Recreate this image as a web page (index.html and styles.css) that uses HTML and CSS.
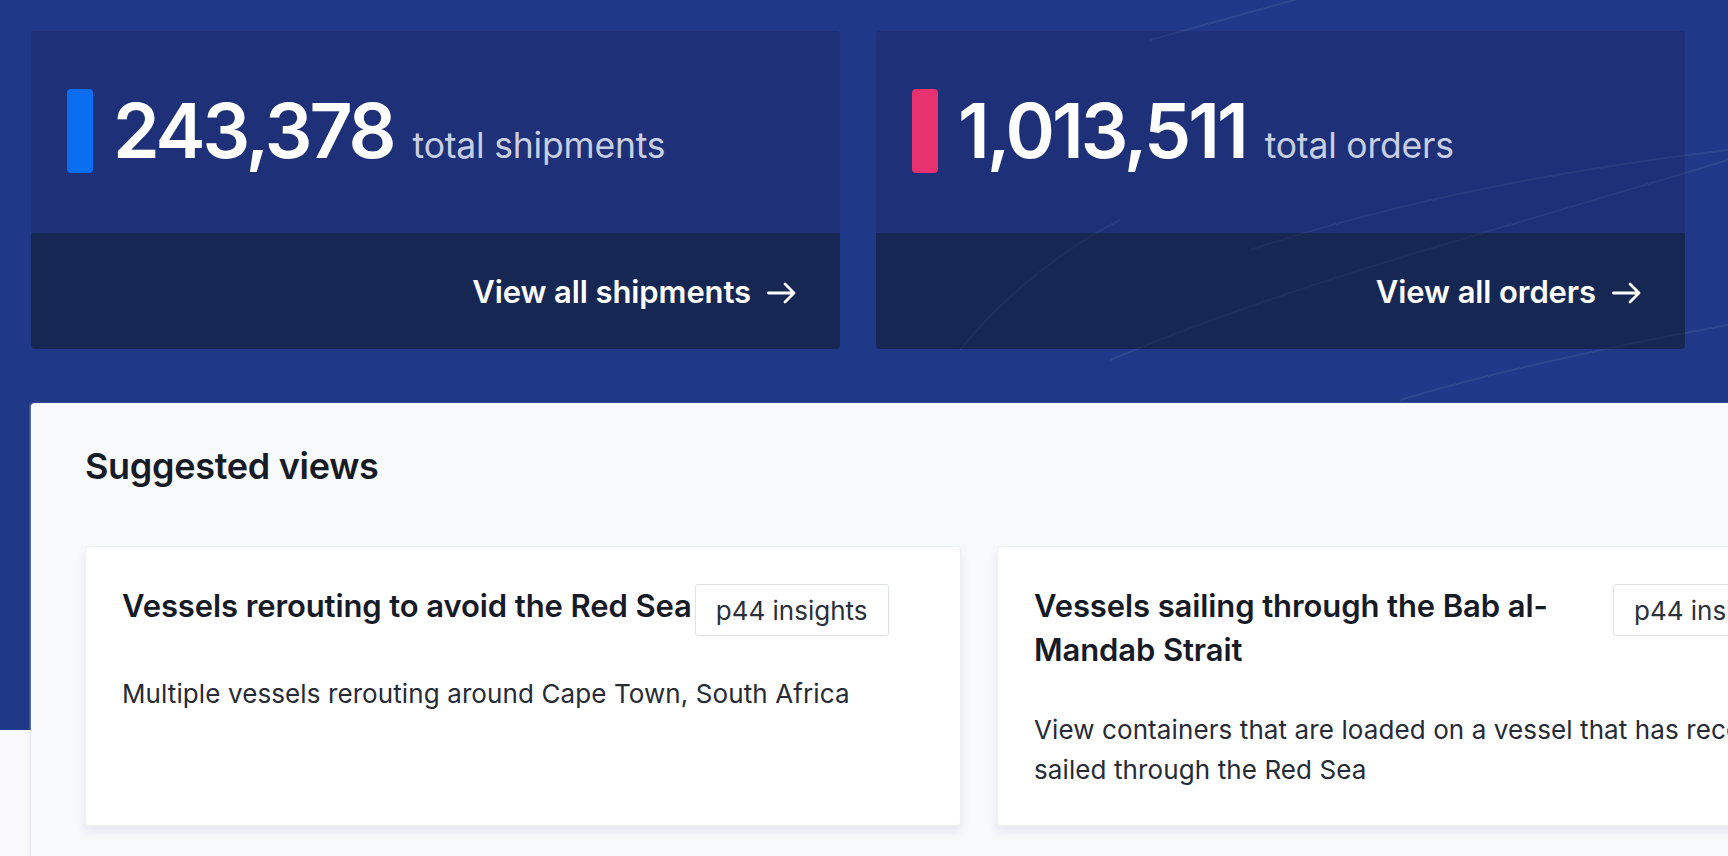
FILE: index.html
```html
<!DOCTYPE html>
<html lang="en">
<head>
<meta charset="utf-8">
<title>Dashboard</title>
<link rel="stylesheet" href="styles.css">
</head>
<body>
<div class="page">
  <svg class="streaks" width="1728" height="730" viewBox="0 0 1728 730" aria-hidden="true">
    <path d="M1150 40 L1330 -10" />
    <path d="M1110 360 C1300 280 1500 230 1728 160" />
    <path d="M1400 400 C1500 370 1620 345 1728 325" />
    <path d="M960 350 C1000 300 1060 250 1120 220" />
    <path d="M1250 250 C1400 200 1560 170 1728 150" />
  </svg>
  <section class="hero">
    <div class="stat">
      <div class="stat-main">
        <span class="accent accent-blue"></span>
        <div class="stat-figure">
          <span class="stat-num">243,378</span>
          <span class="stat-label">total shipments</span>
        </div>
      </div>
      <a class="stat-link" href="#">View all shipments
        <svg class="arrow" width="30" height="22" viewBox="0 0 30 22"><path d="M1.5 11 H27 M18 2 L27 11 L18 20" /></svg>
      </a>
    </div>
    <div class="stat">
      <div class="stat-main">
        <span class="accent accent-pink"></span>
        <div class="stat-figure">
          <span class="stat-num">1,013,511</span>
          <span class="stat-label">total orders</span>
        </div>
      </div>
      <a class="stat-link" href="#">View all orders
        <svg class="arrow" width="30" height="22" viewBox="0 0 30 22"><path d="M1.5 11 H27 M18 2 L27 11 L18 20" /></svg>
      </a>
    </div>
  </section>
  <section class="panel">
    <h2 class="panel-title">Suggested views</h2>
    <div class="views">
      <article class="view">
        <div class="view-head">
          <h3 class="view-title">Vessels rerouting to avoid the Red Sea</h3>
          <span class="badge">p44 insights</span>
        </div>
        <p class="view-desc">Multiple vessels rerouting around Cape Town, South Africa</p>
      </article>
      <article class="view">
        <div class="view-head">
          <h3 class="view-title">Vessels sailing through the Bab al-Mandab Strait</h3>
          <span class="badge">p44 insights</span>
        </div>
        <p class="view-desc">View containers that are loaded on a vessel that has recently sailed through the Red Sea</p>
      </article>
    </div>
  </section>
</div>
</body>
</html>
```

FILE: styles.css
```css
* { box-sizing: border-box; }
html, body {
  margin: 0;
  padding: 0;
  overflow: hidden;
}
body {
  width: 1728px;
  height: 856px;
  font-family: Inter, "Noto Sans", "Liberation Sans", sans-serif;
  background: linear-gradient(#1f3887 0, #1f3887 730px, #f9f9fb 730px);
}
.page {
  position: relative;
  width: 1728px;
  height: 856px;
  overflow: hidden;
}
.streaks {
  position: absolute;
  left: 0;
  top: 0;
  pointer-events: none;
}
.streaks path {
  fill: none;
  stroke: rgba(255, 255, 255, 0.07);
  stroke-width: 2;
}
.hero {
  position: relative;
  display: grid;
  grid-template-columns: 809px 809px;
  gap: 36px;
  padding: 31px 0 0 31px;
}
.stat {
  display: flex;
  flex-direction: column;
  border-radius: 4px;
  overflow: hidden;
}
.stat-main {
  height: 202px;
  display: flex;
  align-items: flex-start;
  padding: 58px 36px 0;
  background: rgba(27, 22, 70, 0.22);
}
.accent {
  width: 26px;
  height: 84px;
  border-radius: 4px;
  flex-shrink: 0;
  margin-right: 20px;
}
.accent-blue { background: #0b6ef2; }
.accent-pink { background: #e8326f; }
.stat-figure {
  display: flex;
  align-items: baseline;
  height: 84px;
}
.stat-num {
  font-size: 75px;
  font-weight: 600;
  line-height: 84px;
  color: #ffffff;
  letter-spacing: -3px;
}
.stat-label {
  font-size: 35.5px;
  font-weight: 400;
  color: #c9cfe3;
  margin-left: 19px;
  letter-spacing: -0.2px;
}
.stat-link {
  height: 116px;
  display: flex;
  align-items: center;
  justify-content: flex-end;
  padding-right: 43px;
  background: rgba(14, 21, 34, 0.5);
  color: #ffffff;
  font-size: 31px;
  font-weight: 600;
  text-decoration: none;
  letter-spacing: -0.1px;
}
.arrow {
  margin-left: 16px;
  margin-top: 4px;
}
.arrow path {
  fill: none;
  stroke: #ffffff;
  stroke-width: 2.8;
  stroke-linecap: round;
  stroke-linejoin: round;
}
.panel {
  position: relative;
  margin: 54px 0 0 31px;
  width: 1800px;
  height: 460px;
  background: #f8f9fa;
  border-radius: 4px 0 0 0;
  padding: 41px 0 0 54px;
  box-shadow: -1px 0 2px rgba(200, 204, 220, 0.5);
}
.panel-title {
  margin: 0;
  font-size: 36px;
  font-weight: 600;
  line-height: 44px;
  color: #161b26;
  letter-spacing: -0.3px;
}
.views {
  display: flex;
  gap: 36px;
  margin-top: 58px;
}
.view {
  flex: 0 0 876px;
  height: 280px;
  background: #ffffff;
  border: 1px solid #eef0f3;
  border-radius: 4px;
  box-shadow: 0 6px 10px rgba(110, 110, 190, 0.13);
  padding: 37px 36px 0 36px;
}
.view-head {
  display: flex;
  align-items: flex-start;
  gap: 3px;
}
.view-title {
  margin: 0;
  max-width: 576px;
  font-size: 31px;
  font-weight: 600;
  line-height: 44px;
  color: #161b26;
  letter-spacing: -0.1px;
}
.badge {
  flex-shrink: 0;
  height: 52px;
  display: inline-flex;
  align-items: center;
  padding: 0 20px;
  border: 1px solid #dfe2e7;
  border-radius: 3px;
  font-size: 26px;
  color: #2b303a;
  background: #ffffff;
}
.view-desc {
  margin: 38px 0 0;
  font-size: 26px;
  line-height: 40px;
  color: #262b36;
  letter-spacing: 0.1px;
}
```
